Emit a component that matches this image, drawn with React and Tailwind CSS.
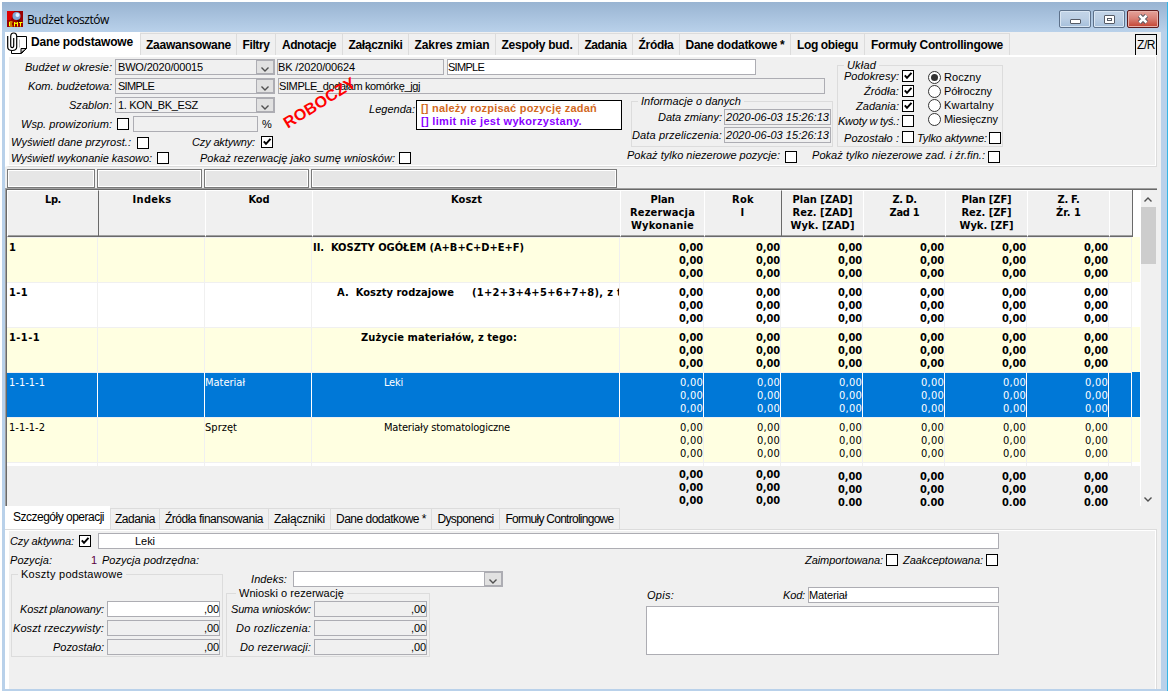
import { useLayoutEffect, useRef } from "react";
import clsx from "clsx";

// single line of text that is spaced out to an exact width
const Txt = ({ w, className, children }) => {
  const ref = useRef(null);

  useLayoutEffect(() => {
    const el = ref.current;
    el.style.letterSpacing = "0px";
    const natural = el.getBoundingClientRect().width;
    const count = el.textContent.length;
    if (w) el.style.letterSpacing = `${(w - natural) / count}px`;
  }, [w, children]);

  return (
    <span ref={ref} className={clsx("inline-block shrink-0 whitespace-pre", className)}>
      {children}
    </span>
  );
};

const Check = ({ on, className }) => (
  <span className={clsx("block size-3 shrink-0 border border-black bg-white", className)}>
    {on && (
      <svg viewBox="0 0 10 10" className="block size-2.5">
        <path d="M1.800 4.300 4 6.800 8.500 1.800" fill="none" stroke="#000" strokeWidth="2" />
      </svg>
    )}
  </span>
);

const Chevron = ({ className, up }) => (
  <svg viewBox="0 0 8 5" className={clsx("block h-[5px] w-2", className)}>
    <path d={up ? "M.5 4.5 4 1 7.5 4.5" : "M.5.5 4 4 7.5.5"} fill="none" stroke="#505050" strokeWidth="1.4" />
  </svg>
);

const Select = ({ className, children }) => (
  <div className={clsx("flex h-4 shrink-0 items-center border border-[#adadb3]", className)}>
    <div className="flex-1 pl-[2px]">{children}</div>
    <div className="flex h-full w-[18px] items-end justify-center border border-[#adadb3] bg-[#e1e1e1] pb-px">
      <Chevron />
    </div>
  </div>
);

const Field = ({ className, children }) => (
  <div className={clsx("flex h-4 shrink-0 items-center border border-[#adadb3]", className)}>{children}</div>
);

// group box with its caption laid over the top border
const Group = ({ title, w, className, titleClass, children }) => (
  <div className={clsx("relative shrink-0 border border-[#dcdcdc]", className)}>
    <div className={clsx("absolute bg-[#f0f0f0] px-[3px] leading-[13px]", titleClass)}>
      <Txt w={w}>{title}</Txt>
    </div>
    {children}
  </div>
);

const topTabs = [
  ["Zaawansowane", 85, "w-[97px] border-l"],
  ["Filtry", 27, "w-[39px]"],
  ["Adnotacje", 54, "w-[67px]"],
  ["Załączniki", 54, "w-[66px]"],
  ["Zakres zmian", 75, "w-[87px]"],
  ["Zespoły bud.", 71, "w-[83px]"],
  ["Zadania", 42, "w-[54px]"],
  ["Źródła", 35, "w-[47px]"],
  ["Dane dodatkowe *", 99, "w-[111px]"],
  ["Log obiegu", 61, "w-[74px]"],
  ["Formuły Controllingowe", 132, "w-[145px]"],
];

const bottomTabs = [
  ["Zadania", 40, "w-[50px] border-l"],
  ["Źródła finansowania", 98, "w-[109px]"],
  ["Załączniki", 51, "w-[62px]"],
  ["Dane dodatkowe *", 90, "w-[101px]"],
  ["Dysponenci", 56, "w-[68px]"],
  ["Formuły Controlingowe", 108, "w-[120px]"],
];

const GRID = "grid grid-cols-[91px_107px_107px_308px_84px_77px_82px_82px_82px_82px_23px]";

const headers = [
  [["Lp.", 16]],
  [["Indeks", 39]],
  [["Kod", 21]],
  [["Koszt", 31]],
  [["Plan", 24], ["Rezerwacja", 65], ["Wykonanie", 63]],
  [["Rok", 22], ["I", 5]],
  [["Plan [ZAD]", 60], ["Rez. [ZAD]", 60], ["Wyk. [ZAD]", 64]],
  [["Z. D.", 24], ["Zad 1", 30]],
  [["Plan [ZF]", 50], ["Rez. [ZF]", 50], ["Wyk. [ZF]", 54]],
  [["Z. F.", 22], ["Źr. 1", 25]],
  [],
];

const rows = [
  { lp: ["1", 7], cost: [["II.  KOSZTY OGÓŁEM (A+B+C+D+E+F)", 211]], pad: "pl-px", bold: true },
  {
    lp: ["1-1", 19],
    cost: [["A.  Koszty rodzajowe", 117], ["(1+2+3+4+5+6+7+8), z t", 150]],
    pad: "pl-[25px]",
    bold: true,
  },
  { lp: ["1-1-1", 31], cost: [["Zużycie materiałów, z tego:", 156]], pad: "pl-[49px]", bold: true },
  { lp: ["1-1-1-1", 36], code: ["Materiał", 40], cost: [["Leki", 19]], pad: "pl-[72px]", selected: true },
  { lp: ["1-1-1-2", 36], code: ["Sprzęt", 32], cost: [["Materiały stomatologiczne", 126]], pad: "pl-[72px]" },
];

const Amounts = ({ bold }) =>
  [0, 1, 2].map((i) => (
    <div key={i} className="h-[13px]">
      <Txt w={bold ? 24 : 23}>0,00</Txt>
    </div>
  ));

const Row = ({ row, odd }) => {
  const cell = clsx(
    "h-[45px] overflow-hidden border-t border-r border-t-[#f0f0f0] pt-[3px]",
    row.selected ? "border-r-white bg-[#0078d7] text-white" : "border-r-[#f0f0f0]",
    !row.selected && (odd ? "bg-white" : "bg-[#ffffe1]")
  );
  return (
    <div className="flex">
      <div className={clsx(GRID, row.bold && "font-bold")}>
        <div className={clsx(cell, "pl-[2px]")}>
          <Txt w={row.lp[1]}>{row.lp[0]}</Txt>
        </div>
        <div className={cell} />
        <div className={cell}>{row.code && <Txt w={row.code[1]}>{row.code[0]}</Txt>}</div>
        <div className={clsx(cell, row.pad, "flex gap-[18px]")}>
          {row.cost.map(([text, w]) => (
            <Txt key={text} w={w}>{text}</Txt>
          ))}
        </div>
        {[0, 1, 2, 3, 4, 5].map((i) => (
          <div key={i} className={clsx(cell, "text-right")}>
            <Amounts bold={row.bold} />
          </div>
        ))}
        <div className={cell} />
      </div>
      <div className={clsx("h-[45px] w-2", row.selected ? "bg-[#0078d7]" : odd ? "bg-white" : "bg-[#ffffe1]")} />
    </div>
  );
};

const TitleBar = () => (
  <div className="flex h-[30px] items-start bg-linear-to-b from-[#99b4d2] to-[#b9d1ea] pl-[5px]">
    <svg viewBox="0 0 16 16" className="mt-[9px] size-4">
      <rect width="16" height="16" fill="#900" />
      <path d="M0 0h7L4 9H0z" fill="#d00" />
      <path d="M10 8l3 3" stroke="#400" strokeWidth="2" />
      <circle cx="9.5" cy="5" r="4" fill="#7fa8d8" />
      <circle cx="10.5" cy="4" r="2" fill="#e4f1ff" />
      <path d="M5.500 11H2.500v4h3M2.500 13H5M7.500 15.500V11l1.500 2 1.500-2v4.500M12 11.500h3.500M13.500 11.500v4" fill="none" stroke="#ff0" />
    </svg>
    <div className="mt-[9px] ml-1 font-['Open_Sans',sans-serif] text-[12px] leading-[17px]">
      <Txt w={82}>Budżet kosztów</Txt>
    </div>
    <div className="mt-2 mr-2 ml-auto flex gap-[2px]">
      <div className="flex h-[18px] w-8 items-center justify-center rounded-[2px] border border-[#5d718a] bg-linear-to-b from-[#c3d5e8] via-[#bccfe4] via-45% to-[#a5bfdb] shadow-[inset_0_0_0_1px_#d9e6f3]">
        <span className="mt-1 h-[5px] w-[11px] rounded-[1px] border border-[#555b66] bg-white" />
      </div>
      <div className="flex h-[18px] w-8 items-center justify-center rounded-[2px] border border-[#5d718a] bg-linear-to-b from-[#c3d5e8] via-[#bccfe4] via-45% to-[#a5bfdb] shadow-[inset_0_0_0_1px_#d9e6f3]">
        <span className="flex h-[9px] w-[11px] items-center justify-center rounded-[1px] border border-[#555b66] bg-white">
          <span className="h-[3px] w-[5px] border border-[#555b66]" />
        </span>
      </div>
      <div className="flex h-[18px] w-8 items-center justify-center rounded-[2px] border border-[#5c1b1d] bg-linear-to-b from-[#e3a29a] via-[#d98278] via-45% to-[#c2402f] shadow-[inset_0_0_0_1px_#e8b1aa]">
        <svg viewBox="0 0 12 10" className="h-2.5 w-3">
          <path d="M2.500 1.500l7 7M9.500 1.500l-7 7" stroke="#4f5560" strokeWidth="4.500" />
          <path d="M2.500 1.500l7 7M9.500 1.500l-7 7" stroke="#fff" strokeWidth="2.500" />
        </svg>
      </div>
    </div>
  </div>
);

const TopTabs = () => (
  <div className="flex h-[23px] items-end text-[12px] leading-[14px] font-bold">
    <div className="flex h-full w-[135px] gap-1 bg-white pl-[2px]">
      <svg viewBox="0 0 20 22" className="h-[22px] w-5 shrink-0">
        <path d="M10 4.500h9.500v12l-5 5H4.500V19" fill="#fff" stroke="#000" />
        <path d="M14 21v-4.500h5.500z" fill="#ccc" stroke="#000" />
        <path d="M12.500 7.500v8" stroke="#bbb" />
        <path
          d="M.7 4v11q0 3.500 4.500 3.500t4.500-3.500V4.500q0-3.500-3-3.500t-3 3.500v9q0 2.200 1.500 2.200t1.500-2.200V6"
          fill="none"
          stroke="#000"
          strokeWidth="1.200"
        />
      </svg>
      <Txt w={102} className="mt-[3px]">Dane podstawowe</Txt>
    </div>
    {topTabs.map(([name, w, width]) => (
      <div key={name} className={clsx("flex h-[22px] justify-center border-t border-r border-[#dcdcdc] pt-1", width)}>
        <Txt w={w}>{name}</Txt>
      </div>
    ))}
    <div className="mt-0.5 mr-1 -mb-px ml-auto flex h-[22px] w-[22px] items-center justify-center self-start border border-black font-normal">
      <Txt w={18}>Z/R</Txt>
    </div>
  </div>
);

const BudgetForm = () => (
  <div className="w-[825px] italic">
    <div className="flex h-[19px] items-start pt-[2px]">
      <div className="w-[103px] text-right"><Txt w={87}>Budżet w okresie:</Txt></div>
      <Select className="ml-[3px] w-[160px] not-italic"><Txt w={85}>BWO/2020/00015</Txt></Select>
      <Field className="ml-[2px] w-[167px] not-italic"><Txt w={77}>BK /2020/00624</Txt></Field>
      <Field className="ml-[3px] w-[309px] bg-white not-italic"><Txt w={36}>SIMPLE</Txt></Field>
    </div>
    <div className="flex h-[19px] items-start pt-[2px]">
      <div className="w-[103px] text-right"><Txt w={84}>Kom. budżetowa:</Txt></div>
      <Select className="ml-[3px] w-[160px] not-italic"><Txt w={36}>SIMPLE</Txt></Select>
      <Field className="ml-[3px] w-[547px] not-italic"><Txt w={141}>SIMPLE_dodałam komórkę_jgj</Txt></Field>
    </div>
    <div className="flex">
      <div className="w-[407px]">
        <div className="flex h-[19px] items-start pt-[2px]">
          <div className="w-[103px] text-right"><Txt w={43}>Szablon:</Txt></div>
          <Select className="ml-[3px] w-[160px] not-italic"><Txt w={80}>1. KON_BK_ESZ</Txt></Select>
        </div>
        <div className="flex h-[19px] items-start pt-[2px]">
          <div className="w-[103px] text-right"><Txt w={91}>Wsp. prowizorium:</Txt></div>
          <Check className="mt-[2px] ml-[5px]" />
          <Field className="ml-1 w-[125px]" />
          <Txt w={10} className="ml-1 not-italic">%</Txt>
        </div>
        <div className="flex h-[17px] items-start pt-px pl-[2px]">
          <Txt w={120}>Wyświetl dane przyrost.:</Txt>
          <Check className="mt-[3px] ml-[6px]" />
          <Txt w={63} className="ml-[43px]">Czy aktywny:</Txt>
          <Check on className="mt-[2px] ml-[6px]" />
        </div>
        <div className="flex h-[16px] items-start pl-[2px]">
          <Txt w={141}>Wyświetl wykonanie kasowo:</Txt>
          <Check className="mt-[2px] ml-[5px]" />
          <Txt w={195} className="ml-[31px]">Pokaż rezerwację jako sumę wniosków:</Txt>
          <Check className="mt-[2px] ml-1" />
        </div>
      </div>
      <div className="-ml-[47px] flex items-start">
        <Txt w={46} className="mt-[6px]">Legenda:</Txt>
        <div className="mt-[5px] ml-px h-[30px] w-[206px] border border-black bg-white pt-px pl-1 leading-[13px] font-bold not-italic">
          <div className="text-[#d2691e]"><Txt w={176}>[] należy rozpisać pozycję zadań</Txt></div>
          <div className="text-[#8b00ff]"><Txt w={161}>[] limit nie jest wykorzystany.</Txt></div>
        </div>
      </div>
      <div className="ml-[5px] w-[206px]">
        <Group title="Informacje o danych" w={100} className="mt-[6px] ml-1 h-[46px] w-[202px] pt-[7px]" titleClass="-top-[7px] left-[6px]">
          <div className="flex h-[18px] items-start justify-end pr-px">
            <Txt w={64}>Data zmiany:</Txt>
            <Field className="ml-[2px] w-[107px] pl-px"><Txt w={103}>2020-06-03 15:26:13</Txt></Field>
          </div>
          <div className="flex items-start justify-end pr-px">
            <Txt w={90}>Data przeliczenia:</Txt>
            <Field className="ml-[2px] w-[107px] pl-px"><Txt w={103}>2020-06-03 15:26:13</Txt></Field>
          </div>
        </Group>
        <div className="flex items-start">
          <Txt w={153}>Pokaż tylko niezerowe pozycje:</Txt>
          <Check className="mt-1 ml-[5px]" />
          <Txt w={173} className="ml-[15px]">Pokaż tylko niezerowe zad. i źr.fin.:</Txt>
          <Check className="mt-1 ml-[3px]" />
        </div>
      </div>
    </div>
    {/* status stamp across the form */}
    <div className="absolute top-[36px] left-[270px] -rotate-[32deg] text-[16px] leading-5 font-bold text-[#ff0000] not-italic">
      <Txt w={80}>ROBOCZY</Txt>
    </div>
  </div>
);

const Layout = () => (
  <Group title="Układ" w={29} className="mt-2 ml-[3px] h-[82px] w-[166px] italic" titleClass="-top-[7px] left-[6px]">
    <div className="flex">
      <div className="w-[76px] pt-1">
        {[
          ["Podokresy:", 55, true],
          ["Źródła:", 35, true],
          ["Zadania:", 43, true],
          ["Kwoty w tyś.:", 61, false],
        ].map(([name, w, on]) => (
          <div key={name} className="flex h-[15px] items-start justify-end leading-[13px]">
            <Txt w={w}>{name}</Txt>
            <Check on={on} className="ml-[3px]" />
          </div>
        ))}
      </div>
      <div className="pt-1 pl-[14px] not-italic">
        {[
          ["Roczny", 37],
          ["Półroczny", 48],
          ["Kwartalny", 50],
          ["Miesięczny", 54],
        ].map(([name, w], i) => (
          <div key={name} className="flex h-[14px] items-center gap-[3px]">
            <span className="flex size-[13px] items-center justify-center rounded-full border border-[#333] bg-white">
              {i === 0 && <span className="size-[7px] rounded-full bg-[#333]" />}
            </span>
            <Txt w={w}>{name}</Txt>
          </div>
        ))}
      </div>
    </div>
    <div className="mt-px flex items-start pl-[6px] leading-[14px]">
      <Txt w={55}>Pozostało :</Txt>
      <Check className="ml-[3px]" />
      <Txt w={70} className="ml-[3px]">Tylko aktywne:</Txt>
      <Check className="mt-px ml-[2px]" />
    </div>
  </Group>
);

const BudgetTable = () => (
  <div className="flex h-[318px] w-[1152px] overflow-hidden border-t border-l border-[#a0a0a0] font-['DejaVu_Sans_Condensed','DejaVu_Sans',sans-serif] leading-[13px]">
    <div className="flex flex-1 border-t border-l border-[#696969] bg-white">
      <div className="w-[1133px]">
        <div className="flex h-[47px]">
          <div className={clsx(GRID, "font-bold")}>
            {headers.map((lines, i) => (
              <div
                key={i}
                className={clsx(
                  "border-t border-b border-l border-t-white border-b-[#696969] bg-[#f0f0f0] pt-[2px] text-center shadow-[inset_0_-1px_0_#a0a0a0]",
                  i === 1 || i === 6 ? "border-l-[#696969]" : "border-l-white"
                )}
              >
                {lines.map(([text, w]) => (
                  <div key={text} className="h-[13px]">
                    <Txt w={w}>{text}</Txt>
                  </div>
                ))}
              </div>
            ))}
          </div>
          <div className="h-full w-2 border-l border-[#696969] bg-white" />
        </div>
        {rows.map((row, i) => (
          <Row key={row.lp[0]} row={row} odd={i === 1} />
        ))}
        <div className={clsx(GRID, "h-1")}>
          {headers.map((_, i) => (
            <div key={i} className="border-t border-r border-[#f0f0f0]" />
          ))}
        </div>
        <div className="h-10 bg-[#f0f0f0]">
          <div className={clsx(GRID, "text-right font-bold")}>
            {headers.map((_, i) => (
              <div key={i} className={clsx("pr-px", i < 6 ? "pt-[2px]" : "pt-1")}>
                {i > 3 && i < 10 && <Amounts bold />}
              </div>
            ))}
          </div>
        </div>
      </div>
      <div className="flex w-[17px] flex-col border-l border-white bg-[#f0f0f0]">
        <Chevron up className="mt-[7px] mb-[5px] ml-[3px]" />
        <div className="h-[57px] w-[15px] bg-[#cdcdcd]" />
        <Chevron className="mt-auto mb-1 ml-[3px]" />
      </div>
    </div>
  </div>
);

const MoneyRow = ({ label, w, white }) => (
  <div className="flex h-[19px] items-start justify-end pr-[2px]">
    <Txt w={w} className="italic">{label}</Txt>
    <Field className={clsx("ml-[3px] w-[113px] justify-end", white && "bg-white")}>
      <Txt w={15}>,00</Txt>
    </Field>
  </div>
);

const Details = () => (
  <div className="h-[158px] border-l-4 border-white">
    <div className="flex h-[21px] items-start pt-[2px] pl-px">
      <Txt w={64} className="italic">Czy aktywna:</Txt>
      <Check on className="mt-[2px] ml-[5px]" />
      <Field className="ml-[7px] w-[901px] bg-white pl-9"><Txt w={20}>Leki</Txt></Field>
    </div>
    <div className="flex h-[19px] items-start pl-px">
      <Txt w={42} className="italic">Pozycja:</Txt>
      <span className="w-[45px] text-right text-[#5a0040]"><Txt w={6}>1</Txt></span>
      <Txt w={97} className="ml-[5px] italic">Pozycja podrzędna:</Txt>
      <Txt w={78} className="ml-[606px] italic">Zaimportowana:</Txt>
      <Check className="mt-[2px] ml-[3px]" />
      <Txt w={80} className="ml-[5px] italic">Zaakceptowana:</Txt>
      <Check className="mt-[2px] ml-[3px]" />
    </div>
    <div className="flex">
      <Group title="Koszty podstawowe" w={102} className="mt-[3px] ml-[2px] h-[83px] w-[212px] pt-[26px]" titleClass="-top-[7px] left-[6px]">
        <MoneyRow label="Koszt planowany:" w={84} white />
        <MoneyRow label="Koszt rzeczywisty:" w={91} />
        <MoneyRow label="Pozostało:" w={51} />
      </Group>
      <div className="ml-[3px] w-[420px]">
        <div className="flex h-[22px] items-start pl-[25px]">
          <Txt w={36} className="italic">Indeks:</Txt>
          <Select className="ml-[6px] w-[210px] bg-white" />
        </div>
        <Group title="Wnioski o rezerwację" w={105} className="h-16 w-[204px] pt-[7px]" titleClass="-top-[7px] left-[9px]">
          <MoneyRow label="Suma wniosków:" w={80} />
          <MoneyRow label="Do rozliczenia:" w={75} />
          <MoneyRow label="Do rezerwacji:" w={71} />
        </Group>
      </div>
      <div className="w-[353px] pt-4">
        <div className="flex h-[19px] items-start italic">
          <Txt w={27} className="ml-px">Opis:</Txt>
          <Txt w={22} className="ml-[109px]">Kod:</Txt>
          <Field className="ml-[3px] w-[191px] bg-white not-italic"><Txt w={38}>Materiał</Txt></Field>
        </div>
        <div className="h-[49px] border border-[#adadb3] bg-white" />
      </div>
    </div>
  </div>
);

const App = () => {
  return (
    <div className="h-[691px] w-[1169px] overflow-hidden bg-white pt-[2px] pr-px pl-[2px] font-['Liberation_Sans',Arial,sans-serif] text-[11px] leading-[16px] text-black">
      <div className="h-[689px] border-r border-[#35b5e5] bg-[#b9d1ea]">
        <TitleBar />
        <div className="mr-[6px] ml-[3px] h-[657px] bg-[#f0f0f0]">
          <TopTabs />

          {/* main form */}
          <div className="relative mr-1 flex h-[112px] border-t-2 border-r border-b border-l-4 border-t-white border-r-[#dcdcdc] border-b-[#dcdcdc] border-l-white shadow-[inset_-1px_-1px_0_#fff]">
            <BudgetForm />
            <Layout />
          </div>

          {/* filter fields above the grid */}
          <div className="flex h-[21px] items-start gap-[2px] pt-[2px] pl-[2px]">
            <div className="h-[19px] w-[88px] border border-[#7a7a7a] bg-[#e6e6e6] shadow-[inset_0_0_0_1px_#fff]" />
            <div className="h-[19px] w-[105px] border border-[#7a7a7a] bg-[#e6e6e6] shadow-[inset_0_0_0_1px_#fff]" />
            <div className="h-[19px] w-[105px] border border-[#7a7a7a] bg-[#e6e6e6] shadow-[inset_0_0_0_1px_#fff]" />
            <div className="h-[19px] w-[306px] border border-[#7a7a7a] bg-[#e6e6e6] shadow-[inset_0_0_0_1px_#fff]" />
          </div>

          <BudgetTable />

          {/* lower tabs */}
          <div className="flex h-[23px] items-end text-[12px] leading-[14px]">
            <div className="h-full w-[105px] bg-white pt-1 pl-2">
              <Txt w={91}>Szczegóły operacji</Txt>
            </div>
            {bottomTabs.map(([name, w, width]) => (
              <div key={name} className={clsx("flex h-[21px] justify-center border-t border-r border-[#dcdcdc] pt-[3px]", width)}>
                <Txt w={w}>{name}</Txt>
              </div>
            ))}
          </div>
          <div className="mr-1 border-t border-r border-[#dcdcdc]">
            <div className="border-t border-r border-white">
              <Details />
            </div>
          </div>
        </div>
      </div>
    </div>
  );
};

export default App;
